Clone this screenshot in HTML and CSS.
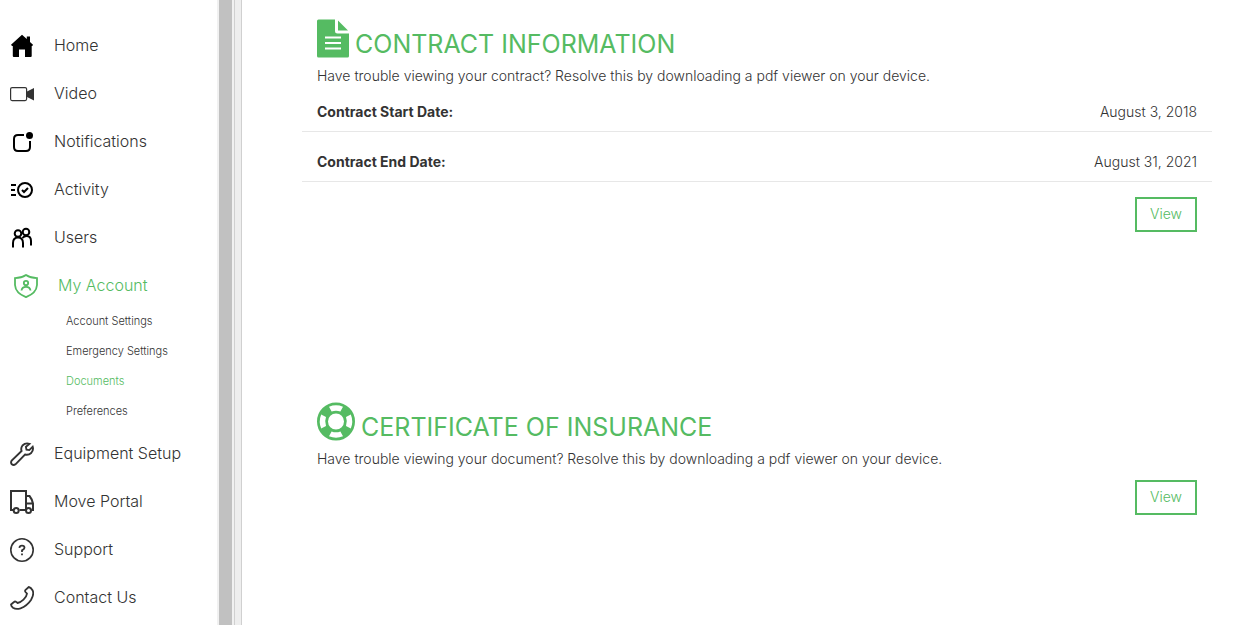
FILE: index.html
```html
<!DOCTYPE html>
<html lang="en">
<head>
  <meta charset="utf-8">
  <title>Documents</title>
  <link rel="stylesheet" href="styles.css">
</head>
<body>
  <div class="page">
    <nav class="sidebar">
      <ul class="menu">
        <li><a href="#">
          <svg class="icon black" viewBox="0 0 24 24"><path fill="currentColor" stroke="none" d="M12 .8L1 10.800L2 12H2.800V22Q2.800 23 3.800 23H9V15.500H15V23H20.700Q21.700 23 21.700 22V12H22.300L23 10.800L20 8V2.500H16.800V5Z"/></svg>
          Home</a></li>
        <li><a href="#">
          <svg class="icon" viewBox="0 0 24 24"><rect x=".6" y="5.600" width="16" height="13" rx="1.500" stroke-width="1.200"/><path fill="currentColor" stroke="none" d="M17 9.500L24 6V18.500L17 15Z"/></svg>
          Video</a></li>
        <li><a href="#">
          <svg class="icon black" viewBox="0 0 24 24"><path stroke-width="2" d="M14 5H8Q4 5 4 9V17Q4 21 8 21H16Q20 21 20 17V11"/><circle cx="19.500" cy="5.500" r="3.500" fill="currentColor" stroke="none"/></svg>
          Notifications</a></li>
        <li><a href="#">
          <svg class="icon black" viewBox="0 0 24 24"><g stroke-width="2"><circle cx="15" cy="12" r="7"/><path d="M12 12L14 14L18 10M1 7H6M1 12H5M1 17H6"/></g></svg>
          Activity</a></li>
        <li><a href="#">
          <svg class="icon black" viewBox="0 0 24 24"><g stroke-width="2"><circle cx="8" cy="7.500" r="3.300"/><circle cx="16" cy="6" r="3.300"/><path d="M3 21.500V17Q3 11.500 8 11.500T13 17V21.500M12.500 12Q14 10 16.500 10Q21 10 21 15V19.500"/></g></svg>
          Users</a></li>
        <li class="active"><a href="#">
          <svg class="icon" viewBox="0 0 24 24"><g stroke-width="1.800"><path d="M12 1Q7.500 4 1 4.200V11Q1.500 19 12 23.200Q22.500 19 23 11V4.200Q16.500 4 12 1Z"/><circle cx="12" cy="9" r="2.200"/><path d="M7.500 16.500Q8 12.800 12 12.800T16.500 16.500"/></g></svg>
          My Account</a>
          <ul class="submenu">
            <li><a href="#">Account Settings</a></li>
            <li><a href="#">Emergency Settings</a></li>
            <li class="current"><a href="#">Documents</a></li>
            <li><a href="#">Preferences</a></li>
          </ul>
        </li>
        <li><a href="#">
          <svg class="icon" viewBox="0 0 24 24"><path stroke-width="1.900" d="M19.500 1.800Q15.500 .4 12.500 3.500Q10.500 6.200 11.600 9L1.700 18.500Q.4 20.600 1.800 22.300Q3.600 23.700 5.500 22.300L15 12.500Q18.500 13.500 21.200 11Q23.800 8 22.700 4.700L19.300 8.100L16.500 7.600L15.900 4.900Z"/></svg>
          Equipment Setup</a></li>
        <li><a href="#">
          <svg class="icon" viewBox="0 0 24 24"><g stroke-width="2"><path d="M3 20H1V1H16V20H9.500M16 6H19.500Q22 9 23 13.500V20H21.500M16 13.500H23"/><circle cx="6.200" cy="20.500" r="2.500"/><circle cx="18.500" cy="20.500" r="2.500"/></g></svg>
          Move Portal</a></li>
        <li><a href="#">
          <svg class="icon" viewBox="0 0 24 24"><circle cx="12" cy="12" r="11.200" stroke-width="1.600"/><path stroke-width="1.800" d="M9.400 9.800Q9.600 7.700 12 7.700Q14.500 7.700 14.500 9.800Q14.500 11.200 12 12.400V14M12 15.500V17.300"/></svg>
          Support</a></li>
        <li><a href="#">
          <svg class="icon" viewBox="0 0 24 24"><path stroke-width="1.800" stroke-linejoin="round" d="M18.800 1L15.300 4.200Q14.800 5 15.500 6L17 7.600Q16.500 11 13.500 13.700Q10.500 16.500 7.600 17L6 15.800Q5 15 4 16L1 18.500Q1 20 3 21.700Q6 23.700 10.500 22.300Q17 20 21 14Q24.300 8.500 22.700 4.500Q21 1.300 18.800 1Z"/></svg>
          Contact Us</a></li>
      </ul>
    </nav>
    <div class="scroller"></div>
    <div class="divider"></div>

    <main class="content">
      <section class="document">
        <h2>
          <svg class="file" viewBox="0 0 32 38"><path d="M1.500 0H18V11.500Q18 14 20.500 14H32V36.500Q32 38 30.500 38H1.500Q0 38 0 36.500V1.500Q0 0 1.500 0Z"/><path d="M21 1V11H31Z"/><path class="lines" d="M8 18H24M8 23.500H24M8 29H24"/></svg>
          CONTRACT INFORMATION
        </h2>
        <p>Have trouble viewing your contract? Resolve this by downloading a pdf viewer on your device.</p>
        <table class="dates">
          <tr><th scope="row">Contract Start Date:</th><td>August 3, 2018</td></tr>
          <tr><th scope="row">Contract End Date:</th><td>August 31, 2021</td></tr>
        </table>
        <div class="actions"><button type="button">View</button></div>
      </section>

      <section class="document">
        <h2>
          <svg class="ring" viewBox="0 0 38 38"><circle class="band" cx="19" cy="19" r="13.500"/><g class="gaps"><path id="gap" d="M12 4.200Q19 1.300 26 4.200L23.400 9Q19 7.300 14.600 9Z"/><use href="#gap" transform="rotate(90 19 19)"/><use href="#gap" transform="rotate(180 19 19)"/><use href="#gap" transform="rotate(270 19 19)"/></g></svg>
          CERTIFICATE OF INSURANCE
        </h2>
        <p>Have trouble viewing your document? Resolve this by downloading a pdf viewer on your device.</p>
        <div class="actions"><button type="button">View</button></div>
      </section>
    </main>
  </div>
</body>
</html>
```

FILE: styles.css
```css
* {
  box-sizing: border-box;
}
body {
  margin: 0;
  background: #fff;
  color: #333;
  font-family: Inter, "Liberation Sans", sans-serif;
  font-size: 14px;
  font-weight: 300;
  line-height: 20px;
}
a {
  color: inherit;
  text-decoration: none;
}
ul {
  margin: 0;
  padding: 0;
  list-style: none;
}

/* left menu */
.page {
  display: flex;
  height: 100vh;
  overflow: hidden;
}
.sidebar {
  flex: 0 0 217px;
  padding-top: 21px;
}
.menu > li > a {
  display: flex;
  align-items: center;
  gap: 20px;
  height: 48px;
  padding: 0 10px;
  font-size: 16px;
  line-height: 24px;
}
.menu > .active > a {
  padding-left: 14px;
}
.active > a,
.current {
  color: #55bb62;
}
.icon {
  flex: none;
  width: 24px;
  height: 24px;
  margin-top: 2px;
  fill: none;
  stroke: currentColor;
}
.black {
  color: #000;
}
.submenu li {
  height: 30px;
  padding-left: 66px;
  font-size: 11px;
  line-height: 24px;
}

.scroller {
  flex: 0 0 17px;
  background: #c1c1c1;
  border: solid #f1f1f1;
  border-width: 0 2px;
}
.divider {
  flex: 0 0 8px;
  background: #eee;
  border: solid #d0d0d0;
  border-width: 0 1px;
}

/* documents */
.content {
  flex: 1;
  padding: 19px 30px 0 60px;
}
.document {
  margin-bottom: 170px;
}
h2 {
  display: flex;
  align-items: flex-end;
  gap: 6px;
  margin: 0 15px 8px;
  color: #55bb62;
  font-size: 25px;
  font-weight: 400;
  line-height: 28px;
}
h2 svg {
  height: 39px;
  fill: #55bb62;
}
.file {
  width: 32px;
}
.lines {
  stroke: #fff;
  stroke-width: 2;
}
.ring {
  width: 38px;
}
.band {
  fill: none;
  stroke: #55bb62;
  stroke-width: 11;
}
.gaps {
  fill: #fff;
}
p {
  margin: 0 15px;
}
.dates {
  width: 100%;
  border-collapse: separate;
  border-spacing: 0;
}
.dates th,
.dates td {
  padding: 20px 15px 9px;
  border-bottom: 1px solid #e7e7e7;
}
.dates tr:first-child > * {
  padding-top: 16px;
}
.dates th {
  font-weight: 700;
  text-align: left;
}
.dates td {
  text-align: right;
}
.actions {
  display: flex;
  justify-content: flex-end;
  margin: 11px 15px 0;
}
.dates + .actions {
  margin-top: 15px;
}
button {
  width: 62px;
  height: 35px;
  padding: 0 0 2px;
  background: #fff;
  border: 2px solid #55bb62;
  color: #55bb62;
  font: inherit;
}
```
